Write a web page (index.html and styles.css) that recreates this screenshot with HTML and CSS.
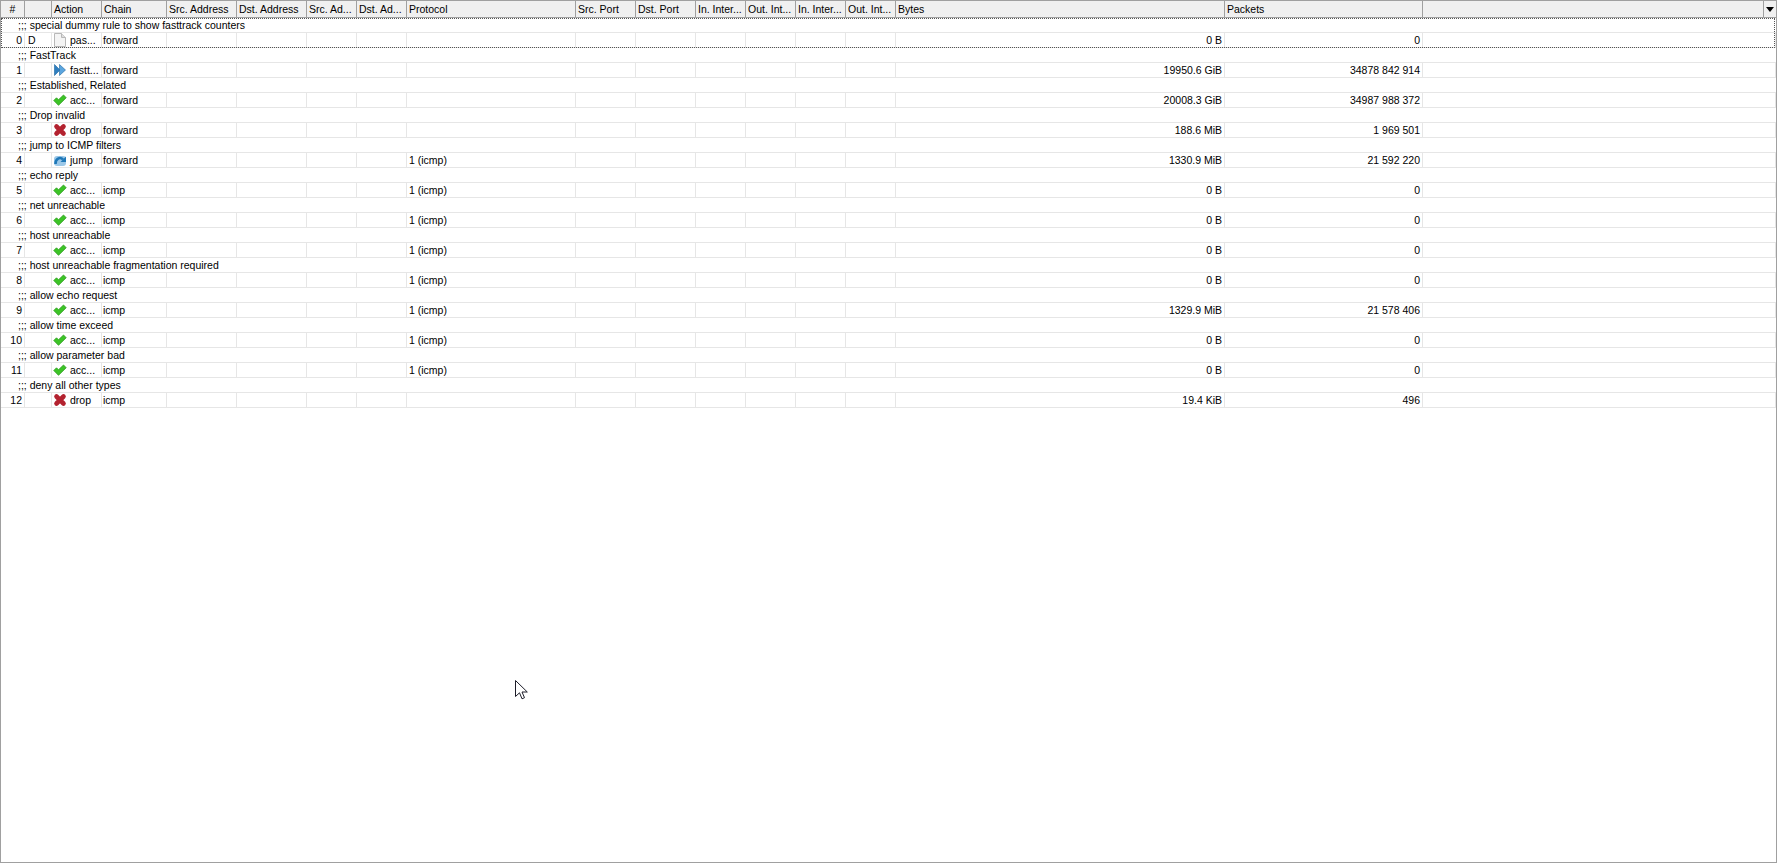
FILE: index.html
```html
<!DOCTYPE html>
<html lang="en">
<head>
  <meta charset="UTF-8">
  <title>Firewall filter rules</title>
  <link rel="stylesheet" href="styles.css">
</head>
<body>
  <svg class="defs" width="0" height="0">
    <symbol id="i-pass" viewBox="0 0 14 14">
      <path d="M1.500 .5H8.500L12.500 4.500V13.500H1.500Z" fill="#f4f4f4" stroke="#b8b8b8"/>
      <path d="M8.500 .5V4.500H12.500" fill="#dedede" stroke="#b8b8b8"/>
    </symbol>
    <symbol id="i-fast" viewBox="0 0 14 14">
      <path d="M1.500 1.500L7 7L1.500 12.500Z" fill="#2f7fc0" stroke="#1f669f" stroke-width=".6"/>
      <path d="M6.500 1.500L12.500 7L6.500 12.500Z" fill="#5aa5df" stroke="#1f669f" stroke-width=".6"/>
    </symbol>
    <symbol id="i-accept" viewBox="0 0 14 14">
      <path d="M.8 7.500L3.500 4.800L5.500 6.800L10.500 2L13.200 4.700L5.500 12.300Z" fill="#3cc426" stroke="#2a9a1c" stroke-width=".8" stroke-linejoin="round"/>
    </symbol>
    <symbol id="i-drop" viewBox="0 0 14 14">
      <path d="M3.500 3.500L10.500 10.500M10.500 3.500L3.500 10.500" fill="none" stroke="#b3222f" stroke-width="4.600" stroke-linecap="round"/>
    </symbol>
    <symbol id="i-jump" viewBox="0 0 14 14">
      <rect x="1" y="3" width="12" height="10" rx="3" fill="#9cc8e8"/>
      <path d="M2.500 11C2.500 5.500 7 3.500 10 6.500" fill="none" stroke="#1f78b8" stroke-width="2.600"/>
      <path d="M7.500 9H13V3.500Z" fill="#1f78b8"/>
    </symbol>
  </svg>

  <div class="list">
    <table class="rules">
      <colgroup>
        <col class="c-num"><col class="c-flag"><col class="c-action"><col class="c-chain">
        <col class="c-addr"><col class="c-addr"><col class="c-short"><col class="c-short">
        <col class="c-proto"><col class="c-port"><col class="c-port">
        <col class="c-short"><col class="c-short"><col class="c-short"><col class="c-short">
        <col class="c-bytes"><col class="c-packets"><col class="c-rest">
      </colgroup>
      <thead>
        <tr>
          <th class="num-head">#</th><th></th><th>Action</th><th>Chain</th>
          <th>Src. Address</th><th>Dst. Address</th><th>Src. Ad...</th><th>Dst. Ad...</th>
          <th>Protocol</th><th>Src. Port</th><th>Dst. Port</th>
          <th>In. Inter...</th><th>Out. Int...</th><th>In. Inter...</th><th>Out. Int...</th>
          <th>Bytes</th><th>Packets</th><th class="menu-head"><span class="menu-btn"></span></th>
        </tr>
      </thead>
      <tbody>
        <tr><td class="comment" colspan="18">;;; special dummy rule to show fasttrack counters</td></tr>
        <tr><td class="num">0</td><td>D</td><td><div class="act"><svg class="ico"><use href="#i-pass"/></svg>pas...</div></td><td>forward</td><td></td><td></td><td></td><td></td><td></td><td></td><td></td><td></td><td></td><td></td><td></td><td class="num">0 B</td><td class="num">0</td><td></td></tr>

        <tr><td class="comment" colspan="18">;;; FastTrack</td></tr>
        <tr><td class="num">1</td><td></td><td><div class="act"><svg class="ico"><use href="#i-fast"/></svg>fastt...</div></td><td>forward</td><td></td><td></td><td></td><td></td><td></td><td></td><td></td><td></td><td></td><td></td><td></td><td class="num">19950.6 GiB</td><td class="num">34878 842 914</td><td></td></tr>

        <tr><td class="comment" colspan="18">;;; Established, Related</td></tr>
        <tr><td class="num">2</td><td></td><td><div class="act"><svg class="ico"><use href="#i-accept"/></svg>acc...</div></td><td>forward</td><td></td><td></td><td></td><td></td><td></td><td></td><td></td><td></td><td></td><td></td><td></td><td class="num">20008.3 GiB</td><td class="num">34987 988 372</td><td></td></tr>

        <tr><td class="comment" colspan="18">;;; Drop invalid</td></tr>
        <tr><td class="num">3</td><td></td><td><div class="act"><svg class="ico"><use href="#i-drop"/></svg>drop</div></td><td>forward</td><td></td><td></td><td></td><td></td><td></td><td></td><td></td><td></td><td></td><td></td><td></td><td class="num">188.6 MiB</td><td class="num">1 969 501</td><td></td></tr>

        <tr><td class="comment" colspan="18">;;; jump to ICMP filters</td></tr>
        <tr><td class="num">4</td><td></td><td><div class="act"><svg class="ico"><use href="#i-jump"/></svg>jump</div></td><td>forward</td><td></td><td></td><td></td><td></td><td>1 (icmp)</td><td></td><td></td><td></td><td></td><td></td><td></td><td class="num">1330.9 MiB</td><td class="num">21 592 220</td><td></td></tr>

        <tr><td class="comment" colspan="18">;;; echo reply</td></tr>
        <tr><td class="num">5</td><td></td><td><div class="act"><svg class="ico"><use href="#i-accept"/></svg>acc...</div></td><td>icmp</td><td></td><td></td><td></td><td></td><td>1 (icmp)</td><td></td><td></td><td></td><td></td><td></td><td></td><td class="num">0 B</td><td class="num">0</td><td></td></tr>

        <tr><td class="comment" colspan="18">;;; net unreachable</td></tr>
        <tr><td class="num">6</td><td></td><td><div class="act"><svg class="ico"><use href="#i-accept"/></svg>acc...</div></td><td>icmp</td><td></td><td></td><td></td><td></td><td>1 (icmp)</td><td></td><td></td><td></td><td></td><td></td><td></td><td class="num">0 B</td><td class="num">0</td><td></td></tr>

        <tr><td class="comment" colspan="18">;;; host unreachable</td></tr>
        <tr><td class="num">7</td><td></td><td><div class="act"><svg class="ico"><use href="#i-accept"/></svg>acc...</div></td><td>icmp</td><td></td><td></td><td></td><td></td><td>1 (icmp)</td><td></td><td></td><td></td><td></td><td></td><td></td><td class="num">0 B</td><td class="num">0</td><td></td></tr>

        <tr><td class="comment" colspan="18">;;; host unreachable fragmentation required</td></tr>
        <tr><td class="num">8</td><td></td><td><div class="act"><svg class="ico"><use href="#i-accept"/></svg>acc...</div></td><td>icmp</td><td></td><td></td><td></td><td></td><td>1 (icmp)</td><td></td><td></td><td></td><td></td><td></td><td></td><td class="num">0 B</td><td class="num">0</td><td></td></tr>

        <tr><td class="comment" colspan="18">;;; allow echo request</td></tr>
        <tr><td class="num">9</td><td></td><td><div class="act"><svg class="ico"><use href="#i-accept"/></svg>acc...</div></td><td>icmp</td><td></td><td></td><td></td><td></td><td>1 (icmp)</td><td></td><td></td><td></td><td></td><td></td><td></td><td class="num">1329.9 MiB</td><td class="num">21 578 406</td><td></td></tr>

        <tr><td class="comment" colspan="18">;;; allow time exceed</td></tr>
        <tr><td class="num">10</td><td></td><td><div class="act"><svg class="ico"><use href="#i-accept"/></svg>acc...</div></td><td>icmp</td><td></td><td></td><td></td><td></td><td>1 (icmp)</td><td></td><td></td><td></td><td></td><td></td><td></td><td class="num">0 B</td><td class="num">0</td><td></td></tr>

        <tr><td class="comment" colspan="18">;;; allow parameter bad</td></tr>
        <tr><td class="num">11</td><td></td><td><div class="act"><svg class="ico"><use href="#i-accept"/></svg>acc...</div></td><td>icmp</td><td></td><td></td><td></td><td></td><td>1 (icmp)</td><td></td><td></td><td></td><td></td><td></td><td></td><td class="num">0 B</td><td class="num">0</td><td></td></tr>

        <tr><td class="comment" colspan="18">;;; deny all other types</td></tr>
        <tr><td class="num">12</td><td></td><td><div class="act"><svg class="ico"><use href="#i-drop"/></svg>drop</div></td><td>icmp</td><td></td><td></td><td></td><td></td><td></td><td></td><td></td><td></td><td></td><td></td><td></td><td class="num">19.4 KiB</td><td class="num">496</td><td></td></tr>
      </tbody>
    </table>
    <div class="focus-box"></div>
    <svg class="pointer" width="13" height="20" viewBox="0 0 13 20">
      <path d="M.5 .5V16.500L4.500 12.800L7 18.800L9.500 17.700L7 12H12.300Z" fill="#fff" stroke="#1c1c28"/>
    </svg>
  </div>
</body>
</html>
```

FILE: styles.css
```css
* {
  box-sizing: border-box;
  margin: 0;
  padding: 0;
}
body {
  background-color: #fff;
  color: #000;
  font-family: "Liberation Sans", Arial, sans-serif;
  font-size: 10.5px;
}
.defs {
  position: absolute;
}
.list {
  position: relative;
  height: 863px;
  border: 1px solid #a0a0a0;
  overflow: hidden;
}
.rules {
  width: 1775px;
  table-layout: fixed;
  border-collapse: separate;
  border-spacing: 0;
}
.c-num { width: 24px; }
.c-flag { width: 27px; }
.c-action { width: 50px; }
.c-chain { width: 65px; }
.c-addr { width: 70px; }
.c-short { width: 50px; }
.c-proto { width: 169px; }
.c-port { width: 60px; }
.c-bytes { width: 329px; }
.c-packets { width: 198px; }

th {
  height: 17px;
  padding: 0 0 1px 2px;
  background-color: #f0f0f0;
  border-right: 1px solid #a0a0a0;
  border-bottom: 1px solid #a0a0a0;
  font-weight: normal;
  text-align: left;
  white-space: nowrap;
  overflow: hidden;
}
th.num-head {
  padding-left: 0;
  text-align: center;
}
th.menu-head {
  position: relative;
  border-right: none;
}
.menu-btn {
  position: absolute;
  top: 0;
  right: 0;
  width: 13px;
  height: 16px;
  border-left: 1px solid #a0a0a0;
}
.menu-btn::after {
  content: "";
  position: absolute;
  top: 6px;
  left: 2px;
  border-left: 4px solid transparent;
  border-right: 4px solid transparent;
  border-top: 5px solid #000;
}
td {
  height: 15px;
  padding: 0 2px;
  border-right: 1px solid #e6e6e6;
  border-bottom: 1px solid #e6e6e6;
  white-space: nowrap;
  overflow: hidden;
  line-height: 14px;
}
td:nth-child(2) {
  padding-left: 3px;
}
td:nth-child(3) {
  padding-left: 1px;
}
td:nth-child(4) {
  padding-left: 1px;
}
td.comment {
  padding-left: 17px;
  border-right: none;
}
td.num {
  text-align: right;
}
.act {
  display: flex;
  align-items: center;
  gap: 3px;
}
.ico {
  flex: none;
  width: 14px;
  height: 14px;
}
.focus-box {
  position: absolute;
  top: 17px;
  left: 0;
  width: 1774px;
  height: 30px;
  border: 1px dotted #555;
  pointer-events: none;
}
.pointer {
  position: absolute;
  top: 679px;
  left: 514px;
}
```
